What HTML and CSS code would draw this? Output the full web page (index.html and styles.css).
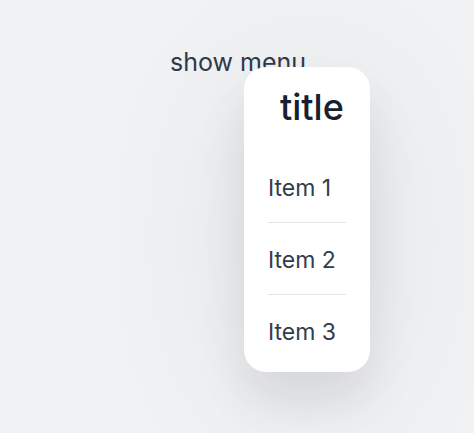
FILE: index.html
```html
<!DOCTYPE html>
<html>
<head>
<meta charset="utf-8">
<link rel="stylesheet" href="styles.css">
</head>
<body>
<div class="stage">
  <div class="anchor">
    <span class="trigger">show menu</span>
    <div class="menu">
      <div class="menu-title">title</div>
      <ul class="menu-list">
        <li class="menu-item">Item 1</li>
        <li class="menu-item">Item 2</li>
        <li class="menu-item">Item 3</li>
      </ul>
    </div>
  </div>
</div>
</body>
</html>
```
FILE: styles.css
```css
html, body {
  margin: 0;
  padding: 0;
  height: 100%;
}
body {
  background: #f1f2f4;
  font-family: Inter, "Noto Sans", sans-serif;
  color: #2f3a4a;
}
.stage {
  padding: 46px 0 0 170px;
}
.anchor {
  position: relative;
  display: inline-block;
}
.trigger {
  font-size: 25px;
  line-height: 32px;
  color: #2f3a4a;
  display: block;
}
.menu {
  position: absolute;
  top: 21px;
  left: 74px;
  width: 126px;
  box-sizing: border-box;
  background: #fff;
  border-radius: 22px;
  padding: 20px 24px 24px 24px;
  box-shadow: 0 30px 50px rgba(0,0,0,0.09), 0 20px 160px rgba(0,0,0,0.08);
}
.menu-title {
  font-size: 36px;
  line-height: 40px;
  font-weight: 500;
  color: #17202e;
  padding-left: 12px;
  white-space: nowrap;
}
.menu-list {
  list-style: none;
  margin: 45px 0 0;
  padding: 0;
}
.menu-item {
  font-size: 23px;
  line-height: 32px;
  color: #333c4b;
  padding: 21px 0 18px;
  border-bottom: 1px solid #e3e4e6;
}
.menu-item:first-child {
  padding-top: 0;
}
.menu-item:last-child {
  border-bottom: none;
  padding-bottom: 0;
}
```
